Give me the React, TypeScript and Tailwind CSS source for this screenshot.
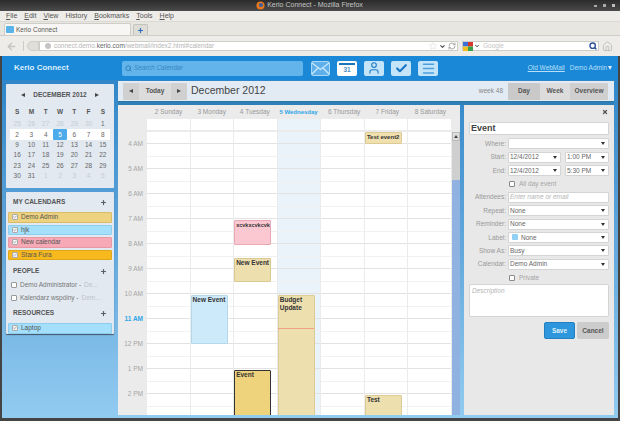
import React from "react";
import { Search, ChevronDown, Plus, X, ArrowLeft, Star, RefreshCw, Home, Check, User, Menu } from "lucide-react";

const Caret = () => <span className="w-0 h-0 border-l-[2px] border-r-[2px] border-t-[3px] border-l-transparent border-r-transparent border-t-[#333] shrink-0" />;
const TriL = ({ c = "#444" }: { c?: string }) => <span className="w-0 h-0 border-t-[2.5px] border-b-[2.5px] border-r-[4px] border-t-transparent border-b-transparent inline-block" style={{ borderRightColor: c }} />;
const TriR = ({ c = "#444" }: { c?: string }) => <span className="w-0 h-0 border-t-[2.5px] border-b-[2.5px] border-l-[4px] border-t-transparent border-b-transparent inline-block" style={{ borderLeftColor: c }} />;

const menus = [["F", "ile"], ["E", "dit"], ["V", "iew"], ["", "History"], ["B", "ookmarks"], ["T", "ools"], ["H", "elp"]] as const;

function Chrome() {
  return (
    <div className="shrink-0">
      <div className="h-[11px] bg-gradient-to-b from-[#2b2b2b] to-[#4b4b4b] flex items-center justify-center relative text-[7px] text-[#c4c4c4] pr-[1px]">
        <svg width="9" height="9" viewBox="0 0 10 10" className="mr-[2px]"><circle cx="5" cy="5" r="4.5" fill="#e8761a" /><circle cx="5.5" cy="4.5" r="2.3" fill="#3b5f9e" /></svg>
        Kerio Connect - Mozilla Firefox
        <div className="absolute right-[5px] top-[4px] flex gap-[6px]">
          <span className="w-[3px] h-[2px] bg-[#aaa] mt-[1px]" /><span className="w-[3px] h-[3px] bg-[#aaa]" /><span className="w-[3px] h-[3px] bg-[#bbb]" />
        </div>
      </div>
      <div className="h-[11px] bg-[#eeece8] border-b border-[#dcdad5] flex text-[7px] text-[#555] relative">
        <div className="flex items-center gap-[6px] pl-[6px]">
          {menus.map(([u, r]) => (
            <span key={r} className="pr-[1px]"><span className="underline">{u}</span>{r}</span>
          ))}
        </div>
      </div>
      <div className="h-[14px] bg-[#e8e6e1] flex items-end pl-[4px] gap-[2px] border-b border-[#cfcdc8]">
        <div className="w-[127px] h-[12px] bg-[#f7f6f4] border border-b-0 border-[#cfcdc8] rounded-t-[2px] flex items-center pl-[1px] gap-[2px] text-[6.5px] text-[#555]">
          <span className="w-[8px] h-[7px] bg-[#58b4e8] rounded-[1px]" />Kerio Connect
        </div>
        <div className="w-[15px] h-[11px] bg-[#dedcd7] border border-b-0 border-[#c5c3be] rounded-t-[2px] flex items-center justify-center">
          <Plus size={7} strokeWidth={4} className="text-[#2f6fb8]" />
        </div>
      </div>
      <div className="h-[20px] bg-[#eeece8] flex items-center pl-[6px] pr-[8px]">
        <ArrowLeft size={11} strokeWidth={3} className="text-[#c4c4c4] shrink-0" />
        <div className="w-[1px] h-[10px] bg-[#ccc] ml-[6px] mr-[3px] shrink-0" />
        <div className="h-[10px] w-[12px] rounded-l-full bg-[#e0ded9] border border-[#cfcdc8] shrink-0" />
        <div className="h-[10px] w-[419px] bg-white border border-[#cfcdc8] flex items-center pl-[5px] text-[6.5px] text-[#b5b5b5] shrink-0">
          <span className="w-[6px] h-[6px] rounded-full bg-[#c4c4c4] mr-[3px]" />
          <span>connect.demo.</span><span className="text-[#666]">kerio.com</span><span>/webmail/index2.html#calendar</span>
          <div className="ml-auto flex items-center gap-[2px] pr-[1px]">
            <Star size={8} className="text-[#ddd]" /><ChevronDown size={7} strokeWidth={4} className="text-[#555]" />
            <RefreshCw size={8} strokeWidth={3} className="text-[#aaa]" />
          </div>
        </div>
        <div className="h-[10px] w-[137px] ml-[4px] bg-white border border-[#cfcdc8] flex items-center text-[6.5px] text-[#c4c4c4] shrink-0">
          <svg width="11" height="9" viewBox="0 0 11 9" className="shrink-0"><rect width="5" height="4.5" fill="#3a70d8" /><rect x="5" width="5" height="4.5" fill="#d8382c" /><rect y="4.5" width="5" height="4.5" fill="#f0c020" /><rect x="5" y="4.5" width="5" height="4.5" fill="#38a048" /></svg>
          <ChevronDown size={6} strokeWidth={4} className="text-[#444] mr-[3px]" />Google
          <Search size={8} strokeWidth={4} className="ml-auto mr-[1px] text-[#2c4f9a]" />
        </div>
        <Home size={11} strokeWidth={2} className="text-[#bcbcbc] ml-[3px] shrink-0" />
      </div>
    </div>
  );
}

function NavIcon({ children, white }: { children: React.ReactNode; white?: boolean }) {
  return <div className={`w-[20px] h-[15px] rounded-[2px] flex items-center justify-center shrink-0 ${white ? "bg-white" : "bg-[#c4e4f9]"}`}>{children}</div>;
}

function Header() {
  return (
    <div className="h-[24px] bg-[#1a87d7] flex items-center shrink-0 text-white relative">
      <span className="w-[120px] pl-[12px] text-[8px] font-bold text-[#dceffb]">Kerio Connect</span>
      <div className="w-[181px] h-[15px] bg-[#62b4ea] rounded-[2px] flex items-center pl-[3px] gap-[2px] text-[6.5px] italic text-[#3a86c4]">
        <Search size={7} strokeWidth={3} className="text-[#2a78bd]" />Search Calendar
      </div>
      <div className="flex items-center gap-[7px] ml-[8px]">
        <div className="w-[19px] h-[15px] flex items-center justify-center bg-[#5fb0ea] rounded-[2px] border border-[#a8d8f7]">
          <svg width="17" height="13" viewBox="0 0 17 13" fill="none" stroke="#c8e8fb" strokeWidth="1.3"><path d="M0 1 L8.5 7.5 L17 1 M0 12 L6 6 M17 12 L11 6" /></svg>
        </div>
        <NavIcon white>
          <div className="w-full h-full flex flex-col items-center pt-[2px]">
            <span className="w-[16px] h-[2px] bg-[#1a75bd] shrink-0" />
            <span className="text-[6.5px] leading-[10px] font-bold text-[#4a90c4]">31</span>
          </div>
        </NavIcon>
        <NavIcon><User size={14} strokeWidth={1.8} className="text-[#1f7cc4]" /></NavIcon>
        <NavIcon><Check size={13} strokeWidth={4} className="text-[#1a76c4]" /></NavIcon>
        <NavIcon><Menu size={15} strokeWidth={2.4} className="text-[#4a9fdc]" /></NavIcon>
      </div>
      <div className="ml-auto pr-[6px] flex items-center text-[6.5px] text-[#b8e0fa] gap-[5px]">
        <span className="underline">Old WebMail</span>
        <span className="flex items-center gap-[1px]">Demo Admin <span className="w-0 h-0 border-l-[2.5px] border-r-[2.5px] border-t-[4px] border-l-transparent border-r-transparent border-t-[#d8eefc]" /></span>
      </div>
    </div>
  );
}

const weeks: [string, boolean][][] = [
  ["25", "26", "27", "28", "29", "30"].map((d) => [d, true] as [string, boolean]).concat([["1", false]]),
  ["2", "3", "4", "5", "6", "7", "8"].map((d) => [d, false] as [string, boolean]),
  ["9", "10", "11", "12", "13", "14", "15"].map((d) => [d, false] as [string, boolean]),
  ["16", "17", "18", "19", "20", "21", "22"].map((d) => [d, false] as [string, boolean]),
  ["23", "24", "25", "26", "27", "28", "29"].map((d) => [d, false] as [string, boolean]),
  [["30", false], ["31", false], ["1", true], ["2", true], ["3", true], ["4", true], ["5", true]],
];

function MiniCal() {
  return (
    <div className="h-[104px] bg-[#e2e9f1] rounded-[1px] shrink-0 pt-[7px] px-[4px]">
      <div className="flex items-center justify-between px-[11px] h-[8px] text-[6.5px] font-bold text-[#555]">
        <TriL /><span>DECEMBER 2012</span><TriR />
      </div>
      <div className="grid grid-cols-7 mt-[8px] text-center text-[6.5px] font-bold text-[#555] h-[10px] items-center">
        {["S", "M", "T", "W", "T", "F", "S"].map((d, i) => <span key={i}>{d}</span>)}
      </div>
      <div className="text-[6.5px] text-[#666] mt-[2px]">
        {weeks.map((w, i) => (
          <div key={i} className={`grid grid-cols-7 h-[10.4px] items-stretch text-center ${i === 1 ? "bg-white" : ""}`}>
            {w.map(([d, o], j) => (
              <span key={j} className={`flex items-center justify-center rounded-[1px] ${i === 1 && j === 3 ? "bg-[#4dabec] text-white" : ""} ${o ? "text-[#c4ccd4]" : ""}`}>{d}</span>
            ))}
          </div>
        ))}
      </div>
    </div>
  );
}

const CalRow = ({ name, bg, border }: { name: string; bg: string; border: string }) => (
  <div className={`h-[10.5px] mx-[2px] rounded-[1px] border flex items-center pl-[3px] gap-[3px] text-[6.5px] text-[#555] mb-[2px] ${bg} ${border}`}>
    <span className="w-[6px] h-[6px] bg-[#f3f3f3] border border-[#aaa] rounded-[1px] flex items-center justify-center"><Check size={4} strokeWidth={4} className="text-[#888]" /></span>
    {name}
  </div>
);
const SecHead = ({ t, className }: { t: string; className: string }) => (
  <div className={`flex items-center justify-between pl-[7px] pr-[7px] text-[6.5px] font-bold text-[#555] ${className}`}>
    {t}<Plus size={7} strokeWidth={4} className="text-[#55606a]" />
  </div>
);
const Person = ({ name, sub }: { name: string; sub: string }) => (
  <div className="h-[13px] flex items-center pl-[5px] gap-[3px] text-[6.5px] text-[#777] whitespace-nowrap">
    <span className="w-[6px] h-[6px] bg-white border border-[#999] rounded-[1px] shrink-0" />{name} - <span className="text-[#bcc3cb]">{sub}</span>
  </div>
);

function Side() {
  return (
    <div className="w-[108px] shrink-0 flex flex-col gap-[4px]">
      <MiniCal />
      <div className="h-[142px] bg-[#e2e9f1] rounded-[1px] shadow-[0_1px_1px_#456] shrink-0 pt-[5px]">
        <SecHead t="MY CALENDARS" className="h-[10px] mb-[5px]" />
        <CalRow name="Demo Admin" bg="bg-[#edd27f]" border="border-[#d8bc68]" />
        <CalRow name="hjk" bg="bg-[#a4dffb]" border="border-[#8fcdec]" />
        <CalRow name="New calendar" bg="bg-[#f7a9b5]" border="border-[#e698a5]" />
        <CalRow name="Stara Fura" bg="bg-[#f8b91f]" border="border-[#e0a818]" />
        <SecHead t="PEOPLE" className="h-[10px] mt-[6px] mb-[2px]" />
        <Person name="Demo Administrator" sub="De..." />
        <Person name="Kalendarz wspólny" sub="Dem..." />
        <SecHead t="RESOURCES" className="h-[10px] mt-[4px] mb-[5px]" />
        <CalRow name="Laptop" bg="bg-[#a4dffb]" border="border-[#8fcdec]" />
      </div>
    </div>
  );
}

function Toolbar() {
  return (
    <div className="h-[21px] bg-[#e2ebf3] flex items-center pl-[5px] pr-[6px] shrink-0 border-b border-[#2b76a5]">
      <div className="flex h-[17px] text-[6.5px] font-bold text-[#555] rounded-[1px] overflow-hidden">
        <span className="w-[16px] bg-[#d0d0d0] flex items-center justify-center"><TriL /></span>
        <span className="w-[32px] bg-[#dcdcdc] flex items-center justify-center">Today</span>
        <span className="w-[16px] bg-[#d0d0d0] flex items-center justify-center"><TriR /></span>
      </div>
      <span className="ml-[4px] text-[10.5px] text-[#444]">December 2012</span>
      <span className="ml-auto text-[6.5px] text-[#888] mr-[5px]">week 48</span>
      <div className="flex h-[17px] text-[6.5px] font-bold text-[#555] rounded-[1px] overflow-hidden">
        <span className="w-[32px] bg-[#c9c9c9] flex items-center justify-center">Day</span>
        <span className="w-[30px] bg-[#dcdcdc] flex items-center justify-center">Week</span>
        <span className="w-[38px] bg-[#cfcfcf] flex items-center justify-center">Overview</span>
      </div>
    </div>
  );
}

const days = ["2 Sunday", "3 Monday", "4 Tuesday", "5 Wednesday", "6 Thursday", "7 Friday", "8 Saturday"];
const hours = ["4 AM", "5 AM", "6 AM", "7 AM", "8 AM", "9 AM", "10 AM", "11 AM", "12 PM", "1 PM", "2 PM"];
type Ev = { t: string; top: number; h: number; cls: string };
const events: Record<number, Ev[]> = {
  1: [{ t: "New Event", top: 163.5, h: 49, cls: "bg-[#cdeafb] border-[#b5d8ec] text-[6.5px]" }],
  2: [
    { t: "xcvkxcvkcvk", top: 88.5, h: 25, cls: "bg-[#fbc8d2] border-[#e8a8b4] text-[5.5px]" },
    { t: "New Event", top: 126.5, h: 24, cls: "bg-[#eedfae] border-[#d9c890] text-[6.5px] whitespace-nowrap" },
    { t: "Event", top: 238.5, h: 50, cls: "bg-[#efd27c] border-[#333] border-[1.5px] text-[6.5px]" },
  ],
  3: [{ t: "Budget Update", top: 163.5, h: 125, cls: "bg-[#eedfae] border-[#dccb94] text-[6.5px]" }],
  5: [
    { t: "Test event2", top: 0.5, h: 12, cls: "bg-[#f0e0ae] border-[#dccb94] text-[6px] whitespace-nowrap" },
    { t: "Test", top: 263.5, h: 25, cls: "bg-[#eedfae] border-[#dccb94] text-[6.5px]" },
  ],
};

function Grid() {
  return (
    <div className="flex-1 bg-[#ebebeb] flex flex-col min-w-0 overflow-hidden">
      <div className="flex h-[14px] shrink-0 pl-[29px] pr-[8px] text-[6.5px] text-[#999]">
        {days.map((d, i) => (
          <span key={d} className={`flex-1 min-w-0 flex items-center whitespace-nowrap ${i === 3 ? "font-bold text-[#2ea6e8] justify-start pl-[3px] text-[6px]" : "justify-center"}`}>{d}</span>
        ))}
      </div>
      <div className="flex h-[12.5px] shrink-0 pl-[29px] pr-[8px]">
        {days.map((d, i) => <div key={d} className={`flex-1 border-r border-[#ebebeb] border-b-2 ${i === 3 ? "bg-[#eaf3f9]" : "bg-white"}`} />)}
      </div>
      <div className="flex-1 flex min-h-0">
        <div className="w-[29px] shrink-0 text-[6.5px] text-[#a5a5a5] text-right pr-[4px]">
          {hours.map((h) => (
            <div key={h} className={`h-[25px] flex items-center justify-end ${h === "11 AM" ? "font-bold text-[#2ea6e8]" : ""}`}>{h}</div>
          ))}
        </div>
        {days.map((d, i) => (
          <div key={d} className={`flex-1 relative border-r border-[#ebebeb] ${i === 3 ? "bg-[#eaf3f9]" : "bg-white"}`}>
            {Array.from({ length: 23 }).map((_, r) => (
              <div key={r} className={`h-[12.5px] border-b ${r % 2 === 0 ? "border-[#e2e2e2]" : "border-[#f2f2f2]"}`} />
            ))}
            {(events[i] || []).map((e) => (
              <div key={e.t} className={`absolute left-0 w-[37px] rounded-[1px] border pl-[1px] leading-[8px] font-bold text-[#333] overflow-hidden ${e.cls}`} style={{ top: e.top, height: e.h }}>{e.t}</div>
            ))}
            {i === 3 && <div className="absolute left-0 right-[6px] top-[196px] h-[1px] bg-[#f0a088]" />}
          </div>
        ))}
        <div className="w-[8px] shrink-0 flex flex-col">
          <div className="h-[9px] bg-[#ddd] border border-[#bbb] flex items-center justify-center shrink-0"><span className="w-0 h-0 border-l-[2px] border-r-[2px] border-b-[3px] border-l-transparent border-r-transparent border-b-[#444]" /></div>
          <div className="h-[39px] bg-[#cfcfcf] shrink-0" />
          <div className="flex-1 bg-[#8fb2e0]" />
        </div>
      </div>
    </div>
  );
}

const Label = ({ t }: { t: string }) => <span className="w-[44px] shrink-0 text-right pr-[2px] text-[#999]">{t}</span>;
const Select = ({ v, className = "flex-1", children }: { v?: string; className?: string; children?: React.ReactNode }) => (
  <div className={`h-[11px] bg-white border border-[#d4d4d4] rounded-[1px] flex items-center pl-[1px] pr-[3px] text-[#666] ${className}`}>
    {children}{v}<span className="ml-auto flex"><Caret /></span>
  </div>
);
const Row = ({ children }: { children: React.ReactNode }) => <div className="h-[13.4px] flex items-center pr-[5px]">{children}</div>;
const CheckRow = ({ t }: { t: string }) => (
  <Row><span className="w-[44px] shrink-0" /><span className="w-[6px] h-[6px] bg-white border border-[#888] rounded-[1px] mr-[4px] ml-[1px]" /><span className="text-[#a5a5a5]">{t}</span></Row>
);

function Form() {
  return (
    <div className="w-[150px] shrink-0 bg-[#e8e8e8] text-[6.5px] pl-0 flex flex-col">
      <div className="h-[17px] flex items-start justify-end pr-[6px] pt-[4px]"><X size={6} strokeWidth={5} className="text-[#555]" /></div>
      <div className="h-[13px] mx-[5px] mb-[2px] bg-white border border-[#d4d4d4] rounded-[1px] flex items-center pl-[1px] text-[9px] font-bold text-[#444]">Event</div>
      <Row><Label t="Where:" /><Select /></Row>
      <Row><Label t="Start:" /><Select v="12/4/2012" className="w-[53px] mr-[4px]" /><Select v="1:00 PM" /></Row>
      <Row><Label t="End:" /><Select v="12/4/2012" className="w-[53px] mr-[4px]" /><Select v="5:30 PM" /></Row>
      <CheckRow t="All day event" />
      <Row><Label t="Attendees:" /><div className="flex-1 h-[11px] bg-white border border-[#d4d4d4] rounded-[1px] flex items-center pl-[1px] italic text-[#b5b5b5]">Enter name or email</div></Row>
      <Row><Label t="Repeat:" /><Select v="None" /></Row>
      <Row><Label t="Reminder:" /><Select v="None" /></Row>
      <Row><Label t="Label:" /><Select v="None"><span className="w-[6px] h-[6px] bg-[#8fd0f4] rounded-[1px] mr-[3px] ml-[2px]" /></Select></Row>
      <Row><Label t="Show As:" /><Select v="Busy" /></Row>
      <Row><Label t="Calendar:" /><Select v="Demo Admin" /></Row>
      <CheckRow t="Private" />
      <div className="h-[33px] mx-[5px] bg-white border border-[#d4d4d4] rounded-[2px] pl-[2px] pt-[1px] italic text-[#b5b5b5]">Description</div>
      <div className="flex justify-end gap-[2px] pr-[5px] mt-[5px] text-[6.5px] font-bold">
        <span className="w-[31px] h-[17px] bg-[#2d96dc] border border-[#2280c0] rounded-[2px] flex items-center justify-center text-[#dff1fc]">Save</span>
        <span className="w-[32px] h-[17px] bg-[#cccccc] rounded-[2px] flex items-center justify-center text-[#555]">Cancel</span>
      </div>
    </div>
  );
}

export default function App() {
  return (
    <div className="w-[620px] h-[421px] overflow-hidden flex flex-col bg-[#444] font-['Liberation_Sans',Arial,sans-serif]">
      <Chrome />
      <div className="flex-1 mx-[2px] mb-[3px] flex flex-col min-h-0 bg-white">
        <Header />
        <div className="flex-1 min-h-0 flex gap-[4px] px-[4px] pt-[4px] pb-[3px] bg-gradient-to-b from-[#2f86c8] to-[#92cbf0]">
          <Side />
          <div className="flex-1 min-w-0 flex flex-col">
            <div className="-mt-[3px]"><Toolbar /></div>
            <div className="h-[3px] shrink-0 bg-[#2f7fb8]" />
            <div className="flex-1 min-h-0 flex gap-[4px]">
              <Grid />
              <Form />
            </div>
          </div>
        </div>
      </div>
    </div>
  );
}
